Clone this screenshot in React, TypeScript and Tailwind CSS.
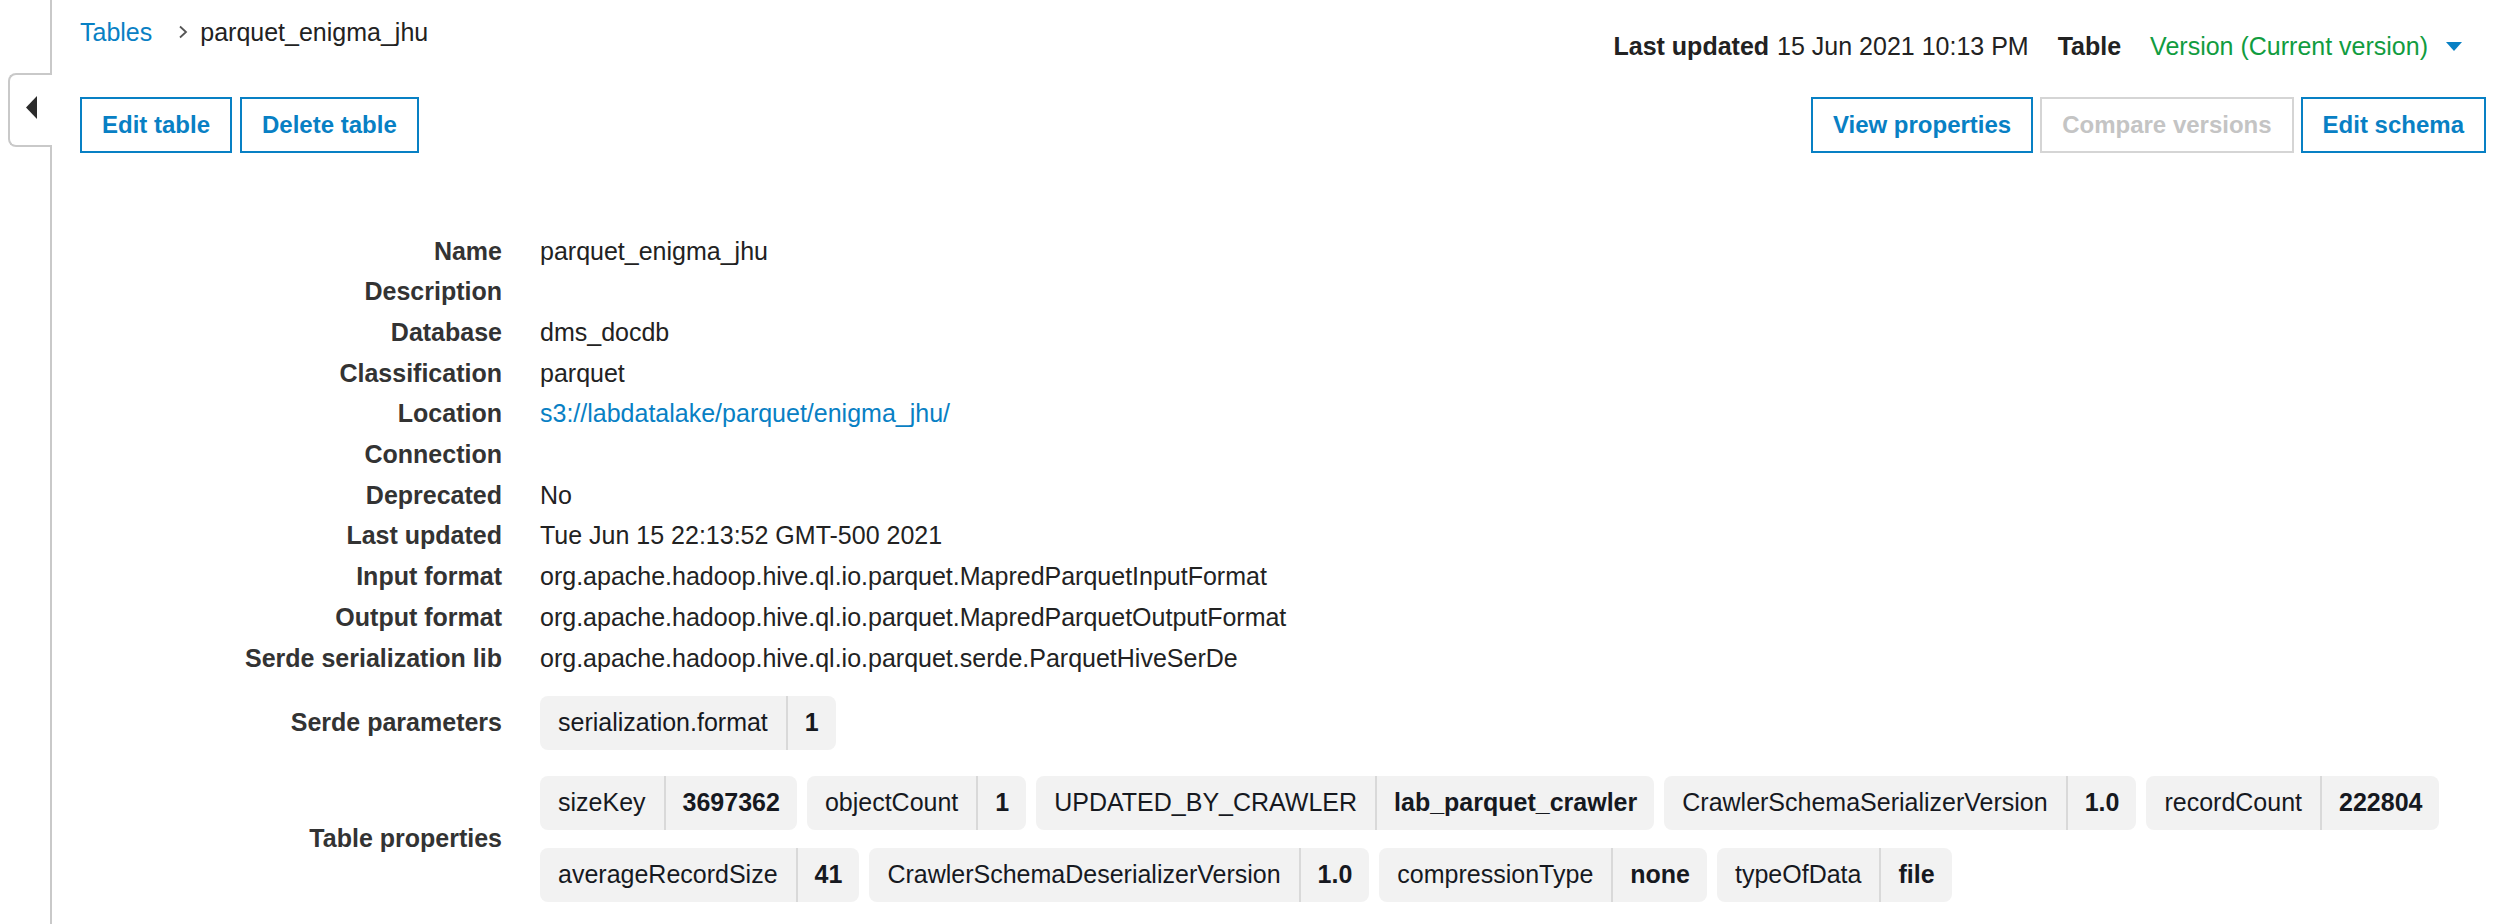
import type { ReactNode } from "react";

type DetailRow = {
  label: string;
  value?: ReactNode;
};

type Pair = [string, string];

const detailRows: DetailRow[] = [
  { label: "Name", value: "parquet_enigma_jhu" },
  { label: "Description" },
  { label: "Database", value: "dms_docdb" },
  { label: "Classification", value: "parquet" },
  {
    label: "Location",
    value: <a className="text-[#0880c4]">s3://labdatalake/parquet/enigma_jhu/</a>
  },
  { label: "Connection" },
  { label: "Deprecated", value: "No" },
  { label: "Last updated", value: "Tue Jun 15 22:13:52 GMT-500 2021" },
  { label: "Input format", value: "org.apache.hadoop.hive.ql.io.parquet.MapredParquetInputFormat" },
  { label: "Output format", value: "org.apache.hadoop.hive.ql.io.parquet.MapredParquetOutputFormat" },
  { label: "Serde serialization lib", value: "org.apache.hadoop.hive.ql.io.parquet.serde.ParquetHiveSerDe" }
];

const serdeParameters: Pair[] = [["serialization.format", "1"]];

// rendered as two fixed rows, same break as the console
const tablePropertyRows: Pair[][] = [
  [
    ["sizeKey", "3697362"],
    ["objectCount", "1"],
    ["UPDATED_BY_CRAWLER", "lab_parquet_crawler"],
    ["CrawlerSchemaSerializerVersion", "1.0"],
    ["recordCount", "222804"]
  ],
  [
    ["averageRecordSize", "41"],
    ["CrawlerSchemaDeserializerVersion", "1.0"],
    ["compressionType", "none"],
    ["typeOfData", "file"]
  ]
];

function KeyValueChip({ name, value }: { name: string; value: string }) {
  return (
    <div className="flex h-[54px] shrink-0 items-stretch rounded-lg bg-[#f2f2f2] text-[#16191f]">
      <span className="flex items-center px-[18px]">{name}</span>
      <span className="w-[2px] bg-[#d9d9d9]" />
      <span className="flex items-center px-[17px] font-bold">{value}</span>
    </div>
  );
}

function OutlineButton({ children, disabled }: { children: ReactNode; disabled?: boolean }) {
  return (
    <button
      className={
        disabled
          ? "h-[56px] border-2 border-[#d5d5d5] px-[20px] text-[24px] font-bold text-[#c4c4c4]"
          : "h-[56px] border-2 border-[#0880c4] px-[20px] text-[24px] font-bold text-[#0880c4]"
      }
      disabled={disabled}
      type="button"
    >
      {children}
    </button>
  );
}

function SideRail() {
  return (
    <aside className="flex w-[52px] shrink-0 flex-col">
      <div className="h-[73px] border-r-2 border-[#c9c9c9]" />
      <button
        className="ml-[8px] flex h-[74px] items-start rounded-l-lg border-2 border-r-0 border-[#c9c9c9] bg-white pl-[16px] pt-[21px]"
        type="button"
      >
        <svg height="23" viewBox="0 0 11 23" width="11">
          <polygon fill="#2b2b2b" points="11,0 0,11.5 11,23" />
        </svg>
      </button>
      <div className="flex-1 border-r-2 border-[#c9c9c9]" />
    </aside>
  );
}

export default function App() {
  return (
    <div className="flex h-[924px] overflow-hidden bg-white font-['Liberation_Sans',Arial,sans-serif] text-[25px] text-[#222]">
      <SideRail />

      <main className="flex-1 pl-[28px] pr-[20px]">
        <div className="flex h-[97px] items-start justify-between">
          <nav className="mt-[17px] flex items-center leading-[30px]">
            <a className="text-[#0880c4]">Tables</a>
            <svg className="ml-[26px] mr-[12px]" height="14" viewBox="0 0 10 14" width="10">
              <polyline fill="none" points="2,1.5 8,7 2,12.5" stroke="#555" strokeWidth="1.8" />
            </svg>
            <span className="text-[#222]">parquet_enigma_jhu</span>
          </nav>

          <div className="mr-[24px] mt-[31px] flex items-center leading-[30px]">
            <span className="font-bold text-[#222]">Last updated</span>
            <span className="ml-[8px]">15 Jun 2021 10:13 PM</span>
            <span className="ml-[29px] font-bold">Table</span>
            <span className="ml-[29px] text-[#119c40]">Version (Current version)</span>
            <svg className="ml-[18px]" height="9" viewBox="0 0 16 9" width="16">
              <polygon fill="#0880c4" points="0,0 16,0 8,9" />
            </svg>
          </div>
        </div>

        <div className="flex items-center justify-between">
          <div className="flex gap-2">
            <OutlineButton>Edit table</OutlineButton>
            <OutlineButton>Delete table</OutlineButton>
          </div>
          <div className="flex gap-[7px]">
            <OutlineButton>View properties</OutlineButton>
            <OutlineButton disabled>Compare versions</OutlineButton>
            <OutlineButton>Edit schema</OutlineButton>
          </div>
        </div>

        <section className="mt-[77.5px] grid grid-cols-[422px_1fr] gap-x-[38px]">
          {detailRows.map((row) => (
            <div className="contents" key={row.label}>
              <div className="text-right font-bold leading-[40.7px] text-[#333]">{row.label}</div>
              <div className="leading-[40.7px]">{row.value ?? ""}</div>
            </div>
          ))}

          <div className="mt-[17.5px] flex items-center justify-end font-bold text-[#333]">Serde parameters</div>
          <div className="mt-[17.5px] flex gap-[10px]">
            {serdeParameters.map(([name, value]) => (
              <KeyValueChip key={name} name={name} value={value} />
            ))}
          </div>

          <div className="mt-[26px] flex items-center justify-end font-bold text-[#333]">Table properties</div>
          <div className="mt-[26px] flex flex-col gap-[18px]">
            {tablePropertyRows.map((pairs, index) => (
              <div className="flex gap-[10px]" key={index}>
                {pairs.map(([name, value]) => (
                  <KeyValueChip key={name} name={name} value={value} />
                ))}
              </div>
            ))}
          </div>
        </section>
      </main>
    </div>
  );
}
